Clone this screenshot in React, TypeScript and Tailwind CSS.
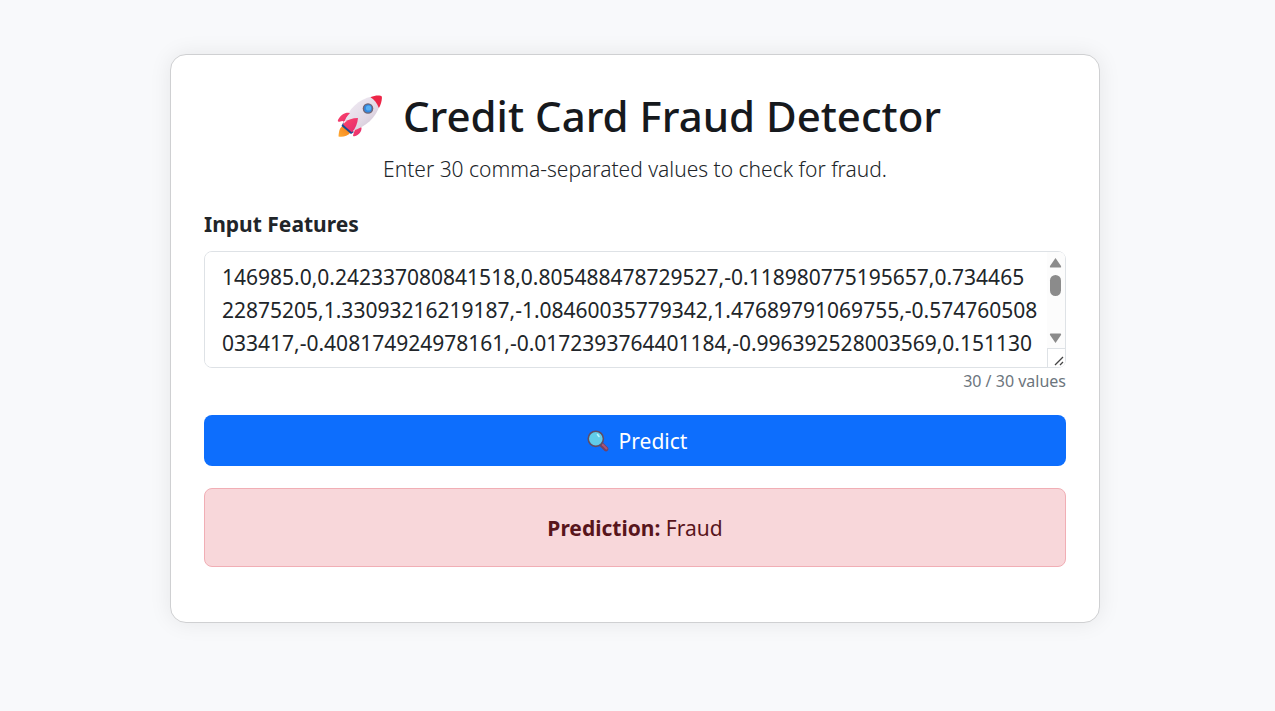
import { useState } from "react";

const SAMPLE =
  "146985.0,0.242337080841518,0.805488478729527,-0.118980775195657,0.734465\n22875205,1.33093216219187,-1.08460035779342,1.47689791069755,-0.574760508033417,-0.408174924978161,-0.0172393764401184,-0.996392528003569,0.151130463180287,0.615941217301452,-0.340252183671029,-0.802171203884156,-1.14261947301265,-0.201847361920384,0.103926481730295,0.284716350182947,-0.0461927381650294,0.215836471920385,0.746291837465019,-0.194857362910485,0.127364859201837,-0.38472910561829,-0.15372846190382,0.0481726394018273,0.0724918365019284,12.5";

function Rocket() {
  return (
    <svg viewBox="0 0 46 44" className="h-11 w-[46px] shrink-0" aria-hidden="true">
      <defs>
        <linearGradient id="hull" x1="0" y1="0" x2="1" y2="1">
          <stop offset="0" stopColor="#f4eff7" />
          <stop offset="0.6" stopColor="#e2d9e5" />
          <stop offset="1" stopColor="#c9bccd" />
        </linearGradient>
        <linearGradient id="fin" x1="0" y1="0" x2="1" y2="1">
          <stop offset="0" stopColor="#ff4568" />
          <stop offset="1" stopColor="#e02a72" />
        </linearGradient>
        <linearGradient id="flame" x1="1" y1="0" x2="0" y2="1">
          <stop offset="0" stopColor="#f47b16" />
          <stop offset="1" stopColor="#ffab35" />
        </linearGradient>
      </defs>
      <path d="M6 32C2 34 2 38 1.500 42.500c4 .5 9 .2 12-4z" fill="url(#flame)" />
      <path d="M6 29l-1.500 3 9.500 8 3-2z" fill="#174b92" />
      <path d="M13 19C9 18 4 20 1 26c-.6 1.300 .2 1.800 1.500 1.500l7-1z" fill="url(#fin)" />
      <path d="M21 32l3.500 1.500c.3 4-2.500 7.500-7 8.800-1.200 .3-1.800-.5-1.300-1.600l2-6z" fill="url(#fin)" />
      <path d="M7 29C11 15 22 5 35 2.500l7.500 9.500C39 23 29 33 15 37z" fill="url(#hull)" />
      <path d="M33.500 3.200c3.700-1.500 7-2 10-1.400 1.300 .3 1.500 1.200 1.400 2.400-.2 3.300-1.200 6.600-3 9.800-1.700-4.700-4.500-8.300-8.400-10.800z" fill="#ed2547" />
      <path d="M21 24c-6 .2-10 1.500-12.500 4L6 30.500l9 8c3.500-4 5.500-9 6-14.500z" fill="url(#fin)" />
      <path d="M13 19C8.500 18.500 4.500 21 1.500 26c-.6 1.300 .3 1.800 1.500 1.300l3.500-.8L6 30.500c1-4 3.500-8 7-11.500z" fill="url(#fin)" />
      <circle cx="31" cy="14.500" r="5.300" fill="#716573" />
      <circle cx="31" cy="14.500" r="3.900" fill="#3488df" />
      <circle cx="31.500" cy="14" r="2.600" fill="#58b0f4" />
    </svg>
  );
}

function Magnifier() {
  return (
    <svg viewBox="0 0 22 22" className="size-[22px]" aria-hidden="true">
      <path d="M14 14l5 5" stroke="#754262" strokeWidth="4.6" strokeLinecap="round" />
      <path d="M15.5 14.5l4 4" stroke="#a85578" strokeWidth="2" strokeLinecap="round" />
      <circle cx="8.8" cy="8.8" r="7.6" fill="#60cce9" stroke="#604d65" strokeWidth="1.6" />
      <path d="M10.5 4.5l1.5 2" stroke="#b9f4ff" strokeWidth="1.6" strokeLinecap="round" />
    </svg>
  );
}

function ScrollRail() {
  return (
    <div className="pointer-events-none absolute inset-y-px right-px flex w-[18px] flex-col overflow-hidden rounded-r-md bg-[#fcfcfc]" aria-hidden="true">
      <svg viewBox="0 0 18 96" className="h-24 w-full">
        <path d="M8.5 6L14 14Q14.500 15.500 13.500 15.500H3.500Q2.500 15.500 3 14Z" fill="#8b8b8b" />
        <rect x="3" y="23" width="11" height="21" rx="5.500" fill="#8b8b8b" />
        <path d="M8.500 91L14 83Q14.500 81.500 13.500 81.500H3.500Q2.500 81.500 3 83Z" fill="#8b8b8b" />
      </svg>
      <div className="flex-1 border-l border-t border-[#dee2e6] bg-white">
        <svg viewBox="0 0 18 18" className="size-[18px]">
          <path d="M7 16l8-8M12 16l3-3" stroke="#444" strokeWidth="1.300" />
        </svg>
      </div>
    </div>
  );
}

export default function App() {
  const [features, setFeatures] = useState(SAMPLE);
  const count = features.replace(/\s/g, "").split(",").filter(Boolean).length;

  return (
    <main className="min-h-screen bg-[#f8f9fb] pt-[54px] pr-[5px] font-['Noto_Sans',sans-serif] text-[#212529]">
      <section className="mx-auto max-w-[930px] rounded-2xl border border-[#cfd0d2] bg-white px-[33px] pt-8 pb-[55px] shadow-[0_0_22px_rgba(0,0,0,0.08)]">
        <h1 className="flex items-center justify-center gap-5 pl-2 text-[42px] leading-[58px] font-medium text-[#16191d]">
          <Rocket />
          Credit Card Fraud Detector
        </h1>
        <p className="mt-[7px] text-center text-[21px] leading-[34px] font-light text-[#212529]">
          Enter 30 comma-separated values to check for fraud.
        </p>

        <form onSubmit={(e) => e.preventDefault()}>
          <label htmlFor="features" className="mt-[21px] block text-[21px] leading-[34px] font-bold">
            Input Features
          </label>
          <div className="relative mt-2.5">
            <textarea
              id="features"
              value={features}
              onChange={(e) => setFeatures(e.target.value)}
              spellCheck={false}
              className="block h-[117px] w-full resize-none rounded-lg border border-[#dee2e6] bg-white py-[9px] pr-6 pl-[17px] text-[21px] leading-[33px] break-all outline-none [scrollbar-width:none]"
            />
            <ScrollRail />
          </div>
          <p className="mt-px text-right text-base leading-[25px] text-[#6c757d]">{count} / 30 values</p>

          <button
            type="submit"
            className="mt-[21px] flex h-[51px] w-full items-center justify-center gap-2.5 rounded-lg bg-[#0d6efd] pt-px pl-1 text-[21px] leading-[33px] text-white"
          >
            <Magnifier />
            Predict
          </button>
        </form>

        <div
          role="status"
          className="mt-[22px] rounded-lg border border-[#f1aeb5] bg-[#f8d7da] pt-[23px] pb-[21px] text-center text-[21px] leading-[33px] text-[#58151c]"
        >
          <strong className="font-bold">Prediction:</strong> Fraud
        </div>
      </section>
    </main>
  );
}
